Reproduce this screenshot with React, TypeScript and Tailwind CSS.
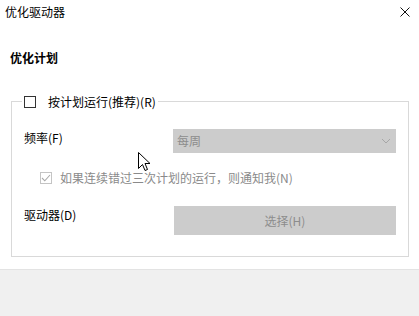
import React from "react";

const font = { fontFamily: '"Noto Sans CJK SC", "Noto Sans", sans-serif' };

function Chevron() {
  return (
    <svg width="10" height="6" viewBox="0 0 10 6" fill="none">
      <path d="M1 1 L5 5 L9 1" stroke="#a6a6a6" strokeWidth="1" />
    </svg>
  );
}

function Cursor() {
  return (
    <svg
      className="absolute left-[138px] top-[152px]"
      width="13"
      height="20"
      viewBox="0 0 13 20"
    >
      <path
        d="M0.5 0.5 L0.5 16.5 L4.5 12.5 L7 18.5 L9.5 17.5 L7 11.5 L12 11.5 Z"
        fill="#fff"
        stroke="#000"
        strokeWidth="1"
        strokeLinejoin="miter"
      />
    </svg>
  );
}

export default function App() {
  return (
    <div
      className="relative flex h-[316px] w-[419px] flex-col overflow-hidden bg-white text-[12px] text-black"
      style={font}
    >
      {/* title bar */}
      <div className="flex h-[24px] items-center justify-between pl-[5px] pr-[9px]">
        <span className="leading-[16px]">优化驱动器</span>
        <svg width="10" height="10" viewBox="0 0 10 10">
          <path d="M0.5 0.5 L9.5 9.5 M9.5 0.5 L0.5 9.5" stroke="#111" strokeWidth="1" />
        </svg>
      </div>

      <div className="mt-[26px] pl-[10px] font-bold leading-[16px]">优化计划</div>

      {/* group box */}
      <div className="relative ml-[11px] mt-[35px] w-[398px] border border-[#d9d9d9]">
        <div className="absolute left-[10px] top-[-8px] flex h-[16px] items-center bg-white px-[2px]">
          <span className="h-[12px] w-[12px] border border-[#333]" />
          <span className="ml-[12px] leading-[16px]">按计划运行(推荐)(R)</span>
        </div>

        <div className="flex flex-col pb-[21px] pl-[12px] pr-[12px] pt-[27px]">
          <div className="flex h-[24px] items-start">
            <span className="mt-[1px] w-[149px] leading-[16px]">频率(F)</span>
            <div className="flex h-[24px] w-[223px] items-center justify-between bg-[#cccccc] pl-[4px] pr-[5px] text-[#8c8c8c]">
              <span className="leading-[16px]">每周</span>
              <Chevron />
            </div>
          </div>

          <div className="mt-[17px] flex h-[16px] items-center pl-[16px] text-[#8a8a8a]">
            <span className="flex h-[12px] w-[12px] items-center justify-center border border-[#c4c4c4]">
              <svg width="10" height="8" viewBox="0 0 10 8" fill="none">
                <path d="M1 4 L3.8 6.8 L9 1" stroke="#a9a9a9" strokeWidth="1.1" />
              </svg>
            </span>
            <span className="ml-[8px] leading-[16px]">如果连续错过三次计划的运行，则通知我(N)</span>
          </div>

          <div className="mt-[20px] flex h-[29px] items-start">
            <span className="mt-[1px] w-[150px] leading-[16px]">驱动器(D)</span>
            <div className="flex h-[29px] w-[222px] items-center justify-center bg-[#cccccc] text-[#8c8c8c]">
              <span className="leading-[16px]">选择(H)</span>
            </div>
          </div>
        </div>
      </div>

      {/* footer */}
      <div className="mt-[12px] flex-1 border-t border-[#e3e3e3] bg-[#f0f0f0]" />

      <Cursor />
    </div>
  );
}
